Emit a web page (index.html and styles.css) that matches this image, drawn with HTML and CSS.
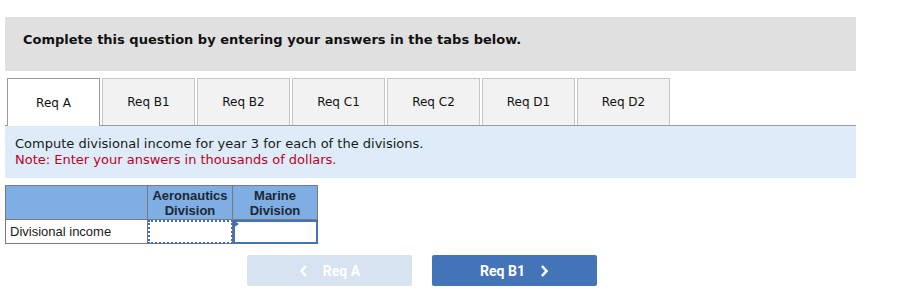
FILE: index.html
```html
<html>
<head>
<title>Req A</title>
<link rel="stylesheet" href="styles.css">
</head>
<body>
<div class="page">

<div class="intro">Complete this question by entering your answers in the tabs below.</div>

<div class="tabs">
<a class="tab active">Req A</a>
<a class="tab">Req B1</a>
<a class="tab">Req B2</a>
<a class="tab">Req C1</a>
<a class="tab">Req C2</a>
<a class="tab">Req D1</a>
<a class="tab">Req D2</a>
</div>

<div class="prompt">
<p>Compute divisional income for year 3 for each of the divisions.</p>
<p class="note">Note: Enter your answers in thousands of dollars.</p>
</div>

<table class="answers">
<tr class="head">
<th class="label"></th>
<th>Aeronautics<br>Division</th>
<th>Marine<br>Division</th>
</tr>
<tr>
<td class="label">Divisional income</td>
<td class="cell dotted"></td>
<td class="cell current"><span class="marker"></span></td>
</tr>
</table>

<div class="nav">
<a class="btn disabled">
<svg width="10" height="14" viewBox="0 0 10 14"><polyline points="7,2 2.5,7 7,12" fill="none" stroke="#fff" stroke-width="2.6"/></svg>
<span>Req A</span>
</a>
<a class="btn">
<span>Req B1</span>
<svg width="10" height="14" viewBox="0 0 10 14"><polyline points="3,2 7.5,7 3,12" fill="none" stroke="#fff" stroke-width="2.6"/></svg>
</a>
</div>

</div>
</body>
</html>
```

FILE: styles.css
```css
body{margin:0;
background:#fff;
font-family:"DejaVu Sans", Verdana, sans-serif;
color:#1a1a1a;}
.page{width:851px;
padding:17px 0 0 5px;}
.intro{background:#e0e0e0;
height:54px;
box-sizing:border-box;
padding:15px 0 0 18px;
font-weight:bold;
font-size:13px;
line-height:16px;
color:#111;}
.tabs{display:flex;
gap:2px;
margin-top:7px;
padding-left:2px;
border-bottom:1px solid #9a9a9a;}
.tab{width:93px;
height:47px;
box-sizing:border-box;
border:1px solid #c6c6c6;
border-bottom:none;
background:#f2f2f2;
font-size:12px;
display:flex;
align-items:center;
justify-content:center;
color:#111;}
.tab.active{background:#fff;
border-color:#9a9a9a;
height:48px;
margin-bottom:-1px;}
.prompt{background:#ddecf8;
padding:10px 10px 10px 10px;
font-size:13px;
line-height:16px;}
.prompt p{margin:0;}
.note{color:#c0001e;}
.answers{margin-top:7px;
border-collapse:collapse;
font-family:"Liberation Sans", Arial, sans-serif;
font-size:13px;}
.answers td,.answers th{border:1px solid #7a7a7a;
padding:0;}
.head th{background:#7eaee3;
height:34px;
font-weight:bold;
color:#1d2733;
line-height:15px;
width:84px;
vertical-align:top;
padding-top:2px;}
.head th.label{width:141px;}
.answers td{height:24px;}
td.label{padding-left:4px;
color:#1a1a1a;}
td.cell{position:relative;}
td.dotted{outline:2px dotted #3f70b5;
outline-offset:-2px;}
td.current{outline:2px solid #4572b5;
outline-offset:-2px;}
.marker{position:absolute;
left:0;
top:0;
width:0;
height:0;
border-top:4px solid transparent;
border-bottom:4px solid transparent;
border-left:6px solid #3f70b5;}
.nav{display:flex;
gap:20px;
margin-top:11px;
padding-left:242px;}
.btn{width:165px;
height:31px;
border-radius:2px;
background:#4374b8;
color:#fff;
font-family:Roboto, "Liberation Sans", sans-serif;
font-weight:bold;
font-size:14px;
display:flex;
align-items:center;
justify-content:center;
gap:14px;
text-decoration:none;}
.btn.disabled{background:#d7e3f1;}
```
